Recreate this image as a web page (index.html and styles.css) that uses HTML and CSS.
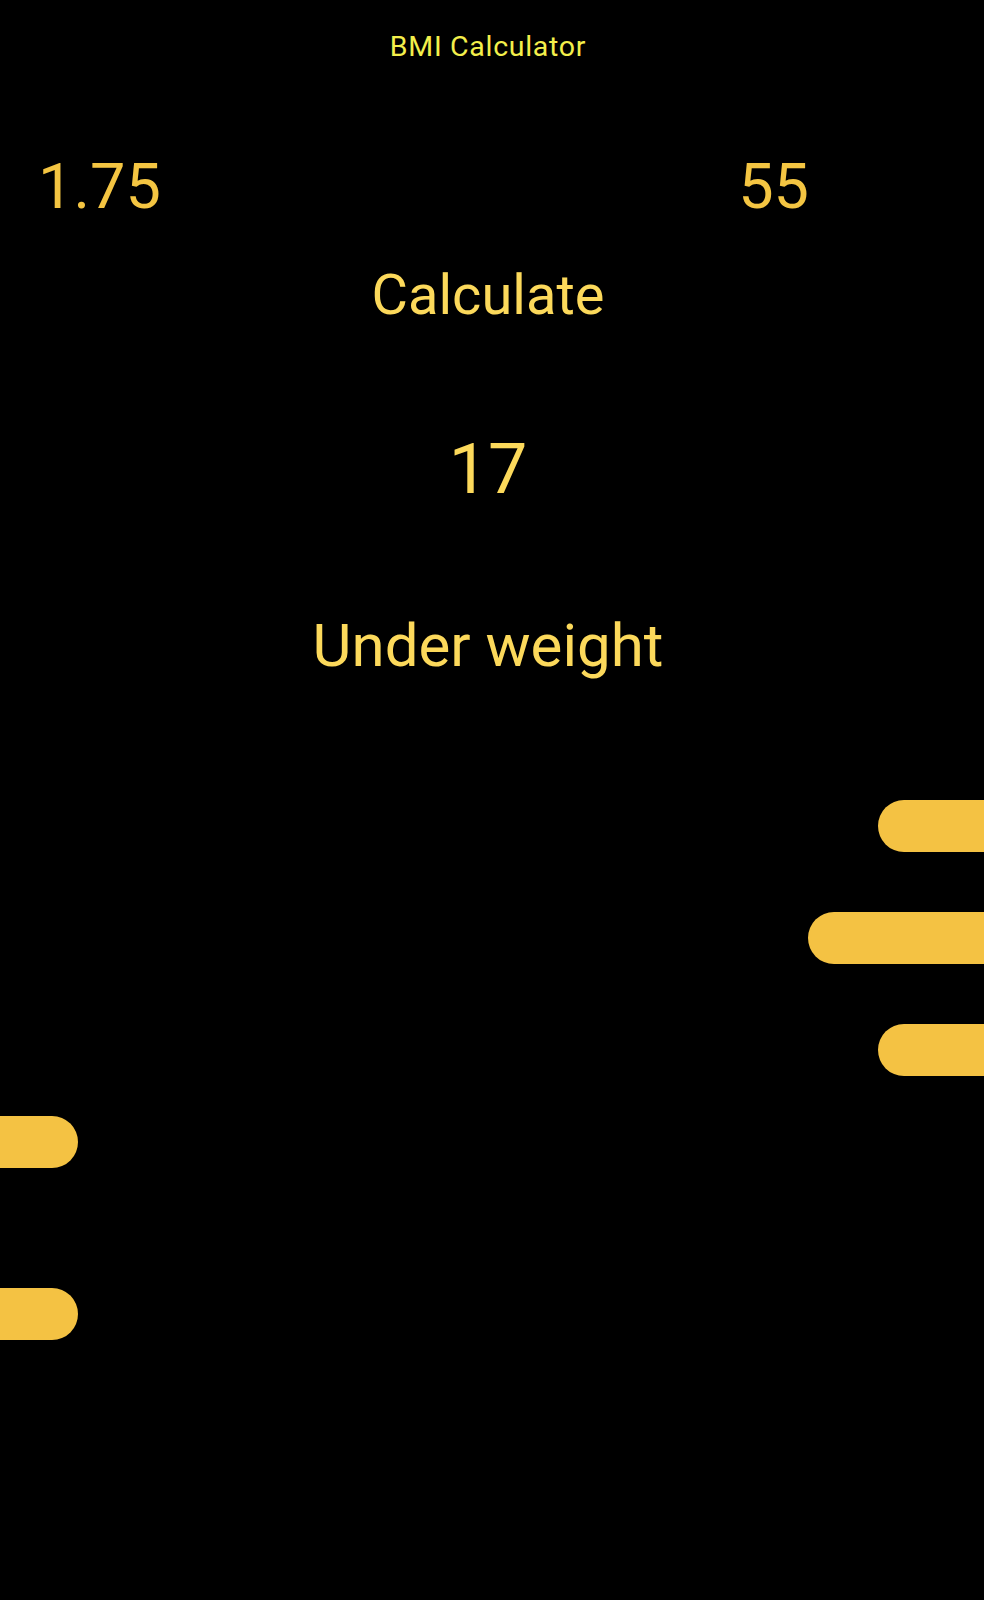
FILE: index.html
```html
<!DOCTYPE html>
<html lang="en">
<head>
<meta charset="utf-8">
<title>BMI Calculator</title>
<link rel="stylesheet" href="styles.css">
</head>
<body>
<div class="app">
  <header class="title">BMI Calculator</header>
  <div class="inputs">
    <div class="value height">1.75</div>
    <div class="value weight">55</div>
  </div>
  <div class="center calculate">Calculate</div>
  <div class="center result">17</div>
  <div class="center status">Under weight</div>
  <div class="bars">
    <div class="bar right short first"></div>
    <div class="bar right long"></div>
    <div class="bar right short"></div>
    <div class="bar left l1"></div>
    <div class="bar left l2"></div>
  </div>
</div>
</body>
</html>
```
FILE: styles.css
```css
html, body {
  margin: 0;
  padding: 0;
  background: #000;
}
body {
  font-family: Roboto, "Noto Sans", "Liberation Sans", sans-serif;
  width: 984px;
  height: 1600px;
  overflow: hidden;
}
.app {
  display: flex;
  flex-direction: column;
}
.title {
  padding-top: 33px;
  font-size: 28.5px;
  line-height: 28px;
  letter-spacing: 0.7px;
  color: #f3ef4b;
  text-align: center;
  padding-right: 8px;
}
.inputs {
  display: flex;
  margin-top: 94px;
  padding-left: 38px;
  padding-right: 175px;
}
.value {
  font-size: 63px;
  line-height: 63px;
  color: #f4c542;
}
.weight {
  margin-left: auto;
}
.center {
  text-align: center;
  color: #fcd95b;
  padding-right: 8px;
}
.calculate {
  margin-top: 49px;
  font-size: 56px;
  line-height: 56px;
}
.result {
  margin-top: 111px;
  font-size: 70px;
  line-height: 70px;
}
.status {
  margin-top: 112px;
  font-size: 60px;
  line-height: 60px;
}
.bars {
  display: flex;
  flex-direction: column;
  margin-top: 124px;
}
.bar {
  height: 52px;
  background: #f4c243;
}
.bar.right {
  align-self: flex-end;
  border-radius: 26px 0 0 26px;
  margin-top: 60px;
}
.bar.right.first {
  margin-top: 0;
}
.bar.short {
  width: 106px;
}
.bar.long {
  width: 176px;
}
.bar.left {
  align-self: flex-start;
  width: 78px;
  border-radius: 0 26px 26px 0;
}
.bar.l1 {
  margin-top: 40px;
}
.bar.l2 {
  margin-top: 120px;
}
```
